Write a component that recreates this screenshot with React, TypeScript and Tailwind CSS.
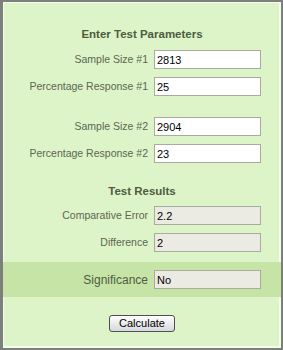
import React from "react";

const font = { fontFamily: '"Liberation Sans", Arial, sans-serif' };

function Row({
  label,
  value,
  readOnly,
  big,
  className,
}: {
  label: string;
  value: string;
  readOnly?: boolean;
  big?: boolean;
  className?: string;
}) {
  return (
    <div className={`flex items-center ${className ?? ""}`}>
      <label
        className={`w-[145px] text-right leading-none ${
          big ? "text-[12px] text-[#4f5b45]" : "text-[10.5px] text-[#5b6652]"
        }`}
      >
        {label}
      </label>
      <input
        readOnly
        value={value}
        className={`ml-[6px] h-[19px] w-[107px] border border-[#a9ab9f] px-[2px] text-[11px] text-black outline-none ${
          readOnly ? "bg-[#ebebe4]" : "bg-white"
        }`}
        style={font}
      />
    </div>
  );
}

export default function App() {
  return (
    <div
      className="h-[350px] w-[283px] border-2 border-l-[3px] border-[#7d7f7a] bg-[#ddf4c8] shadow-[inset_1px_1px_0_#f4fbee,inset_-2px_-2px_0_#f4fbee]"
      style={font}
    >
      <div className="flex flex-col">
        <h2 className="mt-[25px] h-[14px] text-center text-[11.5px] font-bold leading-[14px] text-[#4e5c40]">
          Enter Test Parameters
        </h2>
        <Row className="mt-[9px]" label="Sample Size #1" value="2813" />
        <Row className="mt-[8px]" label="Percentage Response #1" value="25" />
        <Row className="mt-[21px]" label="Sample Size #2" value="2904" />
        <Row className="mt-[8px]" label="Percentage Response #2" value="23" />
        <h2 className="mt-[21px] h-[14px] text-center text-[11.5px] font-bold leading-[14px] text-[#4e5c40]">
          Test Results
        </h2>
        <Row className="mt-[8px]" label="Comparative Error" value="2.2" readOnly />
        <Row className="mt-[8px]" label="Difference" value="2" readOnly />
        <div className="mt-[10px] bg-[#c6e4a6] py-[8px]">
          <Row label="Significance" value="No" readOnly big />
        </div>
        <div className="mt-[18px] flex justify-center">
          <button className="h-[17px] w-[66px] rounded-[3px] border border-[#4d4f55] bg-gradient-to-b from-white to-[#d6d8dc] text-[11px] leading-none text-black">
            Calculate
          </button>
        </div>
      </div>
    </div>
  );
}
